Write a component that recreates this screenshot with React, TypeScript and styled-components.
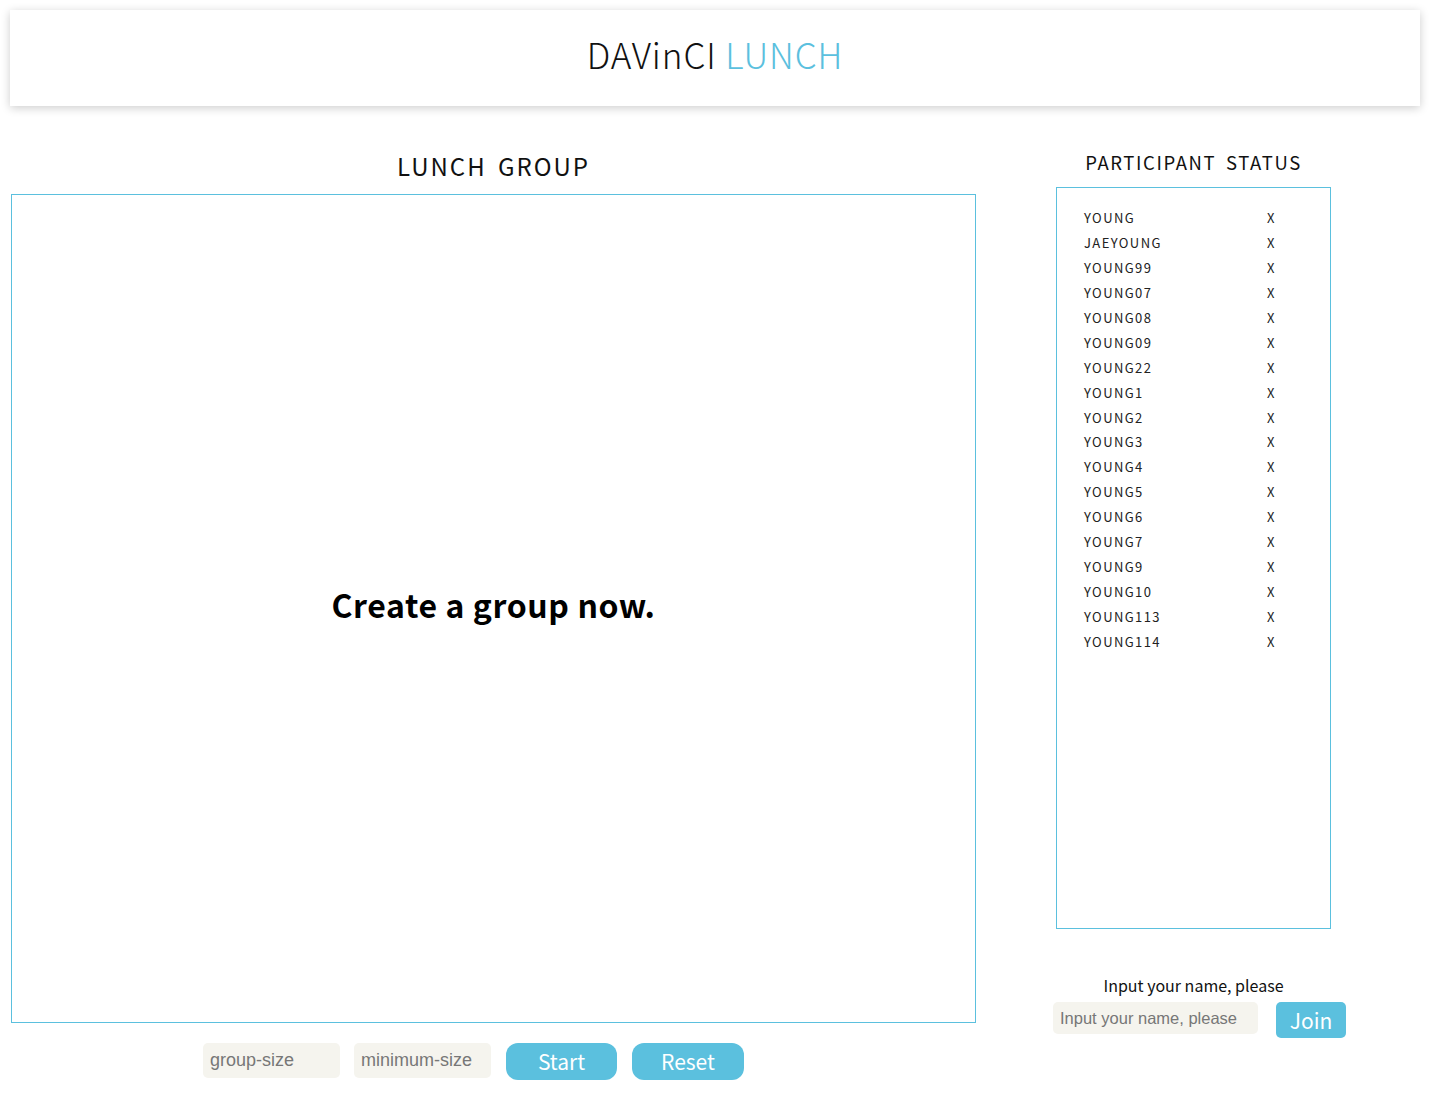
import React from "react";
import styled, { createGlobalStyle } from "styled-components";

const BLUE = "#5bc0de";
const KFONT = `"Noto Sans CJK KR", "Noto Sans", sans-serif`;

const Global = createGlobalStyle`
  html, body { margin: 0; padding: 0; background: #fff; }
  body { font-family: ${KFONT}; color: #111; }
  * { box-sizing: border-box; }
`;

const Page = styled.div`
  width: 1443px;
  min-height: 1107px;
  padding: 10px 0 0 0;
`;

const Header = styled.header`
  margin: 0 23px 0 10px;
  height: 96px;
  background: #fff;
  box-shadow: 0 2px 9px rgba(0, 0, 0, 0.2);
  display: flex;
  align-items: center;
  justify-content: center;
  padding-bottom: 8px;
`;

const Title = styled.h1`
  margin: 0;
  font-family: ${KFONT};
  font-weight: 300;
  font-size: 35px;
  line-height: 40px;
  letter-spacing: 0.9px;
  color: #111;
`;

const Accent = styled.span`
  color: ${BLUE};
`;

const Main = styled.main`
  display: flex;
  align-items: flex-start;
  gap: 80px;
  padding-left: 11px;
`;

const LeftCol = styled.section`
  width: 965px;
  padding-top: 45px;
  display: flex;
  flex-direction: column;
`;

const SectionTitle = styled.h2<{ $size: number; $lh: number; $ls: number }>`
  margin: 0;
  text-align: center;
  font-family: ${KFONT};
  font-weight: 400;
  font-size: ${(p) => p.$size}px;
  line-height: ${(p) => p.$lh}px;
  letter-spacing: ${(p) => p.$ls}px;
  word-spacing: 4px;
  color: #111;
`;

const GroupBox = styled.div`
  margin-top: 13px;
  height: 829px;
  border: 1px solid ${BLUE};
  display: flex;
  align-items: center;
  justify-content: center;
  padding-bottom: 10px;
`;

const Empty = styled.p`
  margin: 0;
  font-family: ${KFONT};
  font-weight: 700;
  font-size: 32px;
  letter-spacing: 0.6px;
  color: #000;
`;

const Controls = styled.div`
  margin-top: 20px;
  padding-left: 192px;
  display: flex;
  align-items: flex-start;
  gap: 14px;
`;

const Field = styled.input<{ $w: number; $h: number; $fs: number }>`
  flex-shrink: 0;
  width: ${(p) => p.$w}px;
  height: ${(p) => p.$h}px;
  border: none;
  border-radius: 5px;
  background: #f5f4ee;
  padding: 0 7px;
  font-family: "Liberation Sans", Arial, sans-serif;
  font-size: ${(p) => p.$fs}px;
  color: #333;
  outline: none;
  &::placeholder { color: #777; }
`;

const Button = styled.button<{ $w: number; $h: number; $r: number }>`
  flex-shrink: 0;
  width: ${(p) => p.$w}px;
  height: ${(p) => p.$h}px;
  border: none;
  border-radius: ${(p) => p.$r}px;
  background: ${BLUE};
  color: #fff;
  font-family: ${KFONT};
  font-size: 21px;
  line-height: 1;
  padding: 0;
  margin-left: 1px;
  cursor: pointer;
`;

const RightCol = styled.aside`
  width: 275px;
  padding-top: 44px;
  display: flex;
  flex-direction: column;
`;

const StatusBox = styled.div`
  margin-top: 13px;
  height: 742px;
  border: 1px solid ${BLUE};
  padding: 17.5px 0 0 27px;
`;

const Row = styled.div`
  display: flex;
  height: 24.9px;
  align-items: center;
  font-family: ${KFONT};
  font-size: 13px;
  letter-spacing: 1.4px;
  color: #222;
`;

const Name = styled.span`
  width: 183px;
`;

const Label = styled.div`
  margin-top: 46px;
  text-align: center;
  font-family: ${KFONT};
  font-size: 16px;
  line-height: 20px;
  color: #111;
`;

const JoinRow = styled.div`
  margin-top: 7px;
  margin-left: -3px;
  display: flex;
  align-items: flex-start;
  gap: 17px;
`;

const names = [
  "YOUNG", "JAEYOUNG", "YOUNG99", "YOUNG07", "YOUNG08", "YOUNG09", "YOUNG22",
  "YOUNG1", "YOUNG2", "YOUNG3", "YOUNG4", "YOUNG5", "YOUNG6", "YOUNG7",
  "YOUNG9", "YOUNG10", "YOUNG113", "YOUNG114",
];

export default function App() {
  return (
    <Page>
      <Global />
      <Header>
        <Title>
          DAVinCI <Accent>LUNCH</Accent>
        </Title>
      </Header>
      <Main>
        <LeftCol>
          <SectionTitle $size={24} $lh={30} $ls={2}>LUNCH GROUP</SectionTitle>
          <GroupBox>
            <Empty>Create a group now.</Empty>
          </GroupBox>
          <Controls>
            <Field $w={137} $h={35} $fs={18} placeholder="group-size" />
            <Field $w={137} $h={35} $fs={18} placeholder="minimum-size" />
            <Button $w={111} $h={37} $r={12}>Start</Button>
            <Button $w={112} $h={37} $r={12}>Reset</Button>
          </Controls>
        </LeftCol>
        <RightCol>
          <SectionTitle $size={18.5} $lh={24} $ls={1.6}>PARTICIPANT STATUS</SectionTitle>
          <StatusBox>
            {names.map((n) => (
              <Row key={n}>
                <Name>{n}</Name>
                <span>X</span>
              </Row>
            ))}
          </StatusBox>
          <Label>Input your name, please</Label>
          <JoinRow>
            <Field $w={205} $h={32} $fs={16.5} placeholder="Input your name, please" />
            <Button $w={70} $h={36} $r={5}>Join</Button>
          </JoinRow>
        </RightCol>
      </Main>
    </Page>
  );
}
